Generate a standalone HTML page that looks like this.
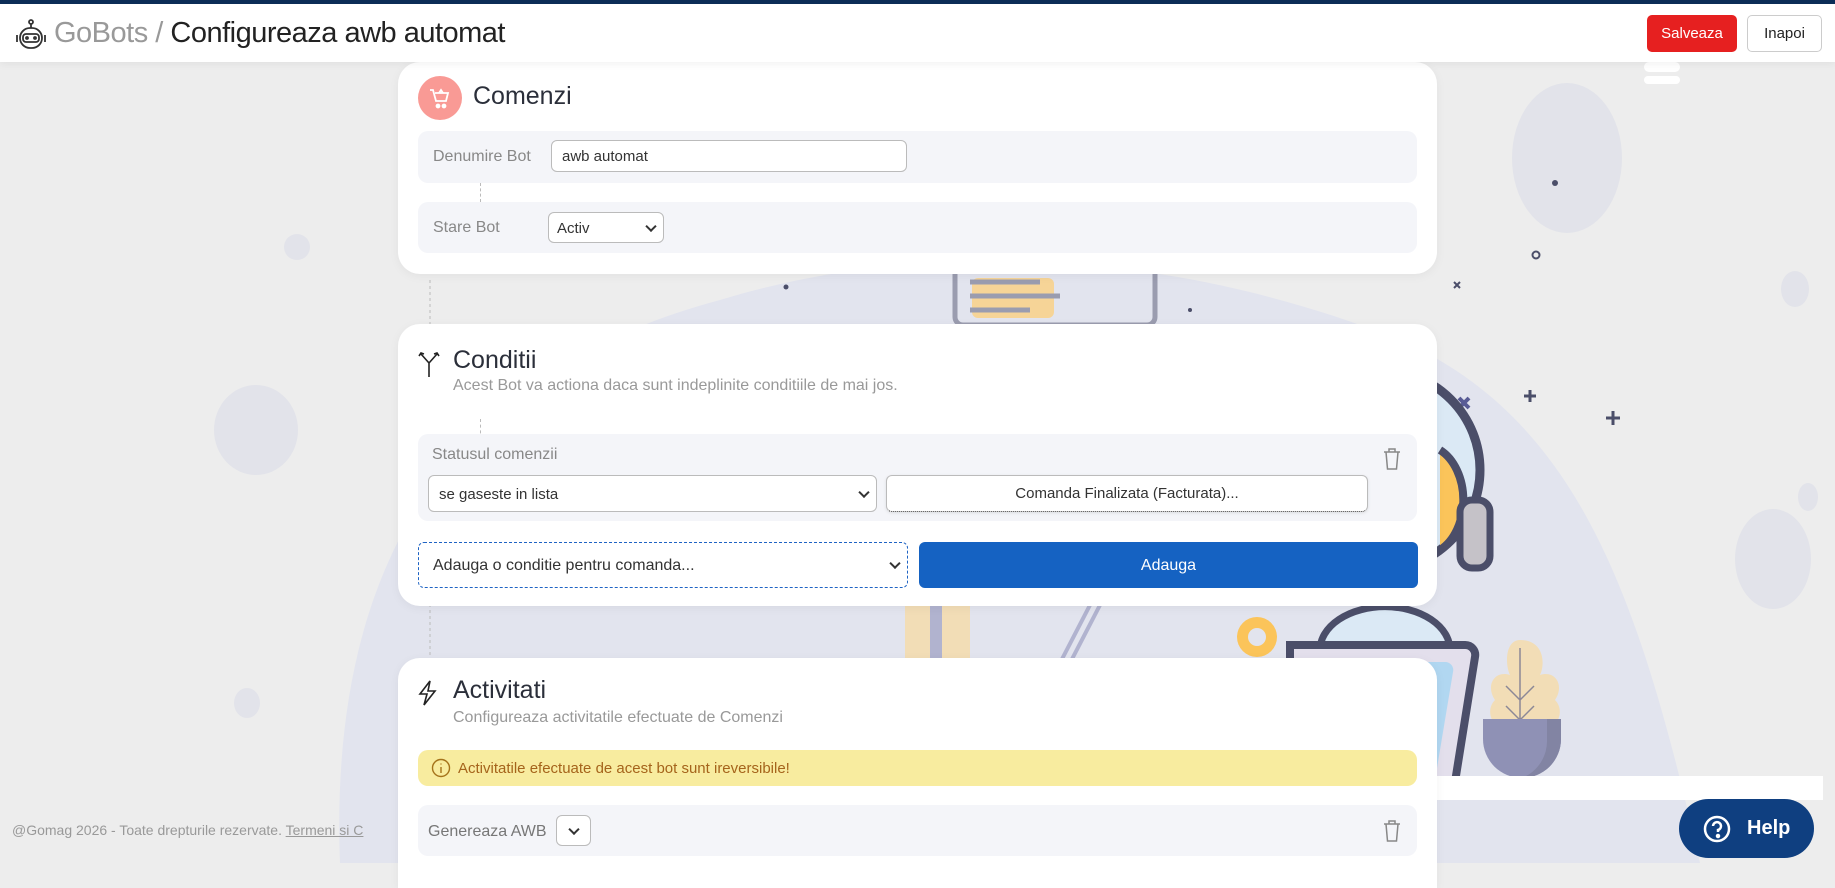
<!DOCTYPE html>
<html><head><meta charset="utf-8"><style>
*{box-sizing:border-box;margin:0;padding:0}
body{width:1835px;height:863px;overflow:hidden;background:#ededed;font-family:"Liberation Sans",sans-serif;position:relative;color:#333}
.abs{position:absolute}
.top{left:0;top:0;width:1835px;height:62px;background:#fff;border-top:4px solid #0c2d57;box-shadow:0 2px 8px rgba(0,0,0,.06);z-index:5}
.card{position:absolute;left:398px;width:1039px;background:#fff;border-radius:22px;box-shadow:0 2px 10px rgba(0,0,0,.05);z-index:3}
.row{position:absolute;left:20px;width:999px;background:#f4f5f9;border-radius:10px}
.lbl{position:absolute;color:#888;font-size:16px}
.inp{position:absolute;background:#fff;border:1px solid #bbb;border-radius:6px;font-size:15px;color:#333}
.chev{position:absolute;right:8px;top:50%;width:8px;height:8px;border-right:2px solid #333;border-bottom:2px solid #333;transform:translateY(-70%) rotate(45deg)}
.h{position:absolute;font-size:25px;color:#2b2f3a}
.sub{position:absolute;font-size:16px;color:#999}
</style></head><body>
<svg class="abs" style="left:0;top:0;z-index:1" width="1835" height="863">
<path d="M340 863 C330 600 420 380 720 300 C950 230 1200 260 1400 340 C1580 420 1640 600 1700 863 Z" fill="#e2e4ee"/>
<ellipse cx="1567" cy="158" rx="55" ry="75" fill="#e2e3ea"/>
<ellipse cx="1092" cy="136" rx="30" ry="35" fill="#e2e3ea"/>
<ellipse cx="1200" cy="35" rx="45" ry="35" fill="#e2e3ea"/>
<ellipse cx="256" cy="430" rx="42" ry="45" fill="#e2e3ea"/>
<ellipse cx="297" cy="247" rx="13" ry="13" fill="#e2e3ea"/>
<ellipse cx="247" cy="703" rx="13" ry="15" fill="#e2e3ea"/>
<ellipse cx="1773" cy="559" rx="38" ry="50" fill="#e2e3ea"/>
<ellipse cx="1795" cy="289" rx="14" ry="18" fill="#e2e3ea"/>
<ellipse cx="1808" cy="497" rx="10" ry="14" fill="#e2e3ea"/>
<rect x="1644" y="62" width="36" height="10" rx="5" fill="#fff"/>
<rect x="1644" y="76" width="36" height="8" rx="4" fill="#fff"/>
<circle cx="1555" cy="183" r="3" fill="#4b4e69"/>
<circle cx="1536" cy="255" r="3.5" fill="none" stroke="#4b4e69" stroke-width="2"/>
<circle cx="786" cy="287" r="2.5" fill="#4b4e69"/>
<circle cx="1190" cy="310" r="2" fill="#4b4e69"/>
<path d="M1454 282l6 6m0-6l-6 6" stroke="#4b4e69" stroke-width="2"/>
<path d="M1459 398l10 10m0-10l-10 10" stroke="#585b95" stroke-width="4"/>
<path d="M1530 390v12m-6-6h12M1613 411v14m-7-7h14" stroke="#4b4e69" stroke-width="3"/>
<circle cx="1380" cy="470" r="100" fill="#dbe9f5" stroke="#4b4e69" stroke-width="9"/>
<path d="M1440 450 a40 55 0 0 1 0 100" fill="#fbc45a" stroke="#4b4e69" stroke-width="8"/>
<rect x="1460" y="500" width="30" height="68" rx="12" fill="#c5c2c8" stroke="#4b4e69" stroke-width="7"/>
<rect x="1370" y="605" width="20" height="35" rx="8" fill="#b1d7f1" stroke="#4b4e69" stroke-width="5"/>
<path d="M1320 650 a60 40 0 0 1 130 0" fill="#dbe9f5" stroke="#4b4e69" stroke-width="7"/>
<path d="M1290 645 h175 a10 10 0 0 1 10 12 l-20 125 a10 10 0 0 1 -10 8 h-155 z" fill="#e3dfec" stroke="#4b4e69" stroke-width="8"/>
<path d="M1420 662 h25 a8 8 0 0 1 8 10 l-18 108 h-20 z" fill="#b1d7f1"/>
<path d="M1520 640 c-15 0 -15 25 -10 35 c-15 -5 -25 10 -15 25 c-10 10 -5 30 20 35 h20 c25 -5 30 -25 20 -35 c10 -15 0 -30 -15 -25 c5 -10 5 -35 -20 -35z" fill="#f2ddb6"/>
<path d="M1520 648 v90 M1520 700 l-14 -14 M1520 700 l14 -14 M1520 720 l-14 -14 M1520 720 l14 -14" stroke="#8c8896" stroke-width="1.5" fill="none"/>
<path d="M1483 719 h78 v20 a39 39 0 0 1 -78 0 z" fill="#8f91b5"/>
<path d="M1547 719 h14 v20 a39 39 0 0 1 -39 39 a40 40 0 0 0 25 -39z" fill="#8284a3"/>
<circle cx="1257" cy="637" r="20" fill="#fbc45a"/><circle cx="1257" cy="637" r="9" fill="#e2e4ee"/>
<rect x="1430" y="776" width="393" height="24" fill="#fff"/>
<rect x="955" y="265" width="200" height="60" rx="8" fill="none" stroke="#9a9caf" stroke-width="5"/>
<rect x="972" y="278" width="82" height="40" rx="6" fill="#f6d497"/>
<path d="M970 282h70M970 296h90M970 310h60" stroke="#9a9caf" stroke-width="5"/>
<path d="M430 280 v380" stroke="#bbb" stroke-dasharray="3 3"/>
<rect x="905" y="605" width="65" height="58" fill="#f2ddb6"/>
<rect x="930" y="605" width="12" height="58" fill="#b1b3cf"/>
<path d="M1090 605 l-30 58 M1100 605 l-30 58" stroke="#b1b3cf" stroke-width="4"/>
</svg>
<div class="abs top">
<svg class="abs" style="left:14px;top:15px" width="34" height="34" viewBox="0 0 34 34" fill="none" stroke="#333" stroke-width="1.8"><circle cx="17" cy="3" r="2"/><path d="M17 5v4"/><rect x="6" y="9" width="22" height="20" rx="10"/><rect x="9" y="15" width="16" height="8" rx="3"/><path d="M3 16v7M31 16v7"/><circle cx="13" cy="19" r="1" fill="#333"/><circle cx="21" cy="19" r="1" fill="#333"/></svg>
<div class="abs" style="left:54px;top:13px;font-size:29px;letter-spacing:-0.5px;white-space:nowrap"><span style="color:#999">GoBots /</span> <span style="color:#222">Configureaza awb automat</span></div>
<div class="abs" style="left:1647px;top:11px;width:90px;height:37px;background:#e62020;border-radius:5px;color:#fff;font-size:15px;line-height:37px;text-align:center">Salveaza</div>
<div class="abs" style="left:1747px;top:11px;width:75px;height:37px;background:#fff;border:1px solid #ccc;border-radius:5px;color:#222;font-size:15px;line-height:35px;text-align:center">Inapoi</div>
</div>
<div class="card" style="top:62px;height:212px">
<div class="abs" style="left:20px;top:14px;width:44px;height:44px;border-radius:50%;background:#f99a95"></div>
<svg class="abs" style="left:30px;top:24px" width="24" height="24" viewBox="0 0 24 24" fill="none" stroke="#fff" stroke-width="1.8"><path d="M2 4h3l3 11h10l2-8H7"/><path d="M11 7l2-3 2 3"/><circle cx="10" cy="20" r="1.5" fill="#fff"/><circle cx="16" cy="20" r="1.5" fill="#fff"/></svg>
<div class="h" style="left:75px;top:20px">Comenzi</div>
<div class="row" style="top:69px;height:52px">
<div class="lbl" style="left:15px;top:17px">Denumire Bot</div>
<div class="inp" style="left:133px;top:9px;width:356px;height:32px;padding:7px 10px">awb automat</div>
</div>
<div class="row" style="top:140px;height:51px">
<div class="lbl" style="left:15px;top:17px">Stare Bot</div>
<div class="inp" style="left:130px;top:10px;width:116px;height:31px;padding:7px 8px">Activ<span class="chev"></span></div>
</div>
<div class="abs" style="left:82px;top:121px;height:19px;border-left:1px dashed #bbb"></div>
</div>
<div class="card" style="top:324px;height:282px">
<svg class="abs" style="left:19px;top:26px" width="24" height="28" viewBox="0 0 24 28" fill="none" stroke="#222" stroke-width="1.6"><path d="M12 27V13M12 13L4 4M12 13l8-9M2 6l2-3 3 1M22 6l-2-3-3 1"/></svg>
<div class="h" style="left:55px;top:22px">Conditii</div>
<div class="sub" style="left:55px;top:53px">Acest Bot va actiona daca sunt indeplinite conditiile de mai jos.</div>
<div class="abs" style="left:82px;top:95px;height:20px;border-left:1px dashed #bbb"></div>
<div class="row" style="top:110px;height:87px">
<div class="lbl" style="left:14px;top:12px">Statusul comenzii</div>
<div class="inp" style="left:10px;top:41px;width:449px;height:37px;padding:10px 10px">se gaseste in lista<span class="chev"></span></div>
<div class="inp" style="left:468px;top:41px;width:482px;height:37px;line-height:35px;text-align:center;border-bottom:1px dotted #333;box-shadow:0 1px 3px rgba(0,0,0,.1)">Comanda Finalizata (Facturata)...</div>
<svg class="abs" style="left:965px;top:13px" width="18" height="24" viewBox="0 0 18 24" fill="none" stroke="#888" stroke-width="1.5"><path d="M1 5h16M6 5V2h6v3M3 5l1.5 17h9L15 5"/></svg>
</div>
<div class="abs" style="left:20px;top:218px;width:490px;height:46px;background:#fff;border:1px dashed #1e63c4;border-radius:6px;font-size:16px;padding:14px 14px;color:#333">Adauga o conditie pentru comanda...<span class="chev"></span></div>
<div class="abs" style="left:521px;top:218px;width:499px;height:46px;background:#1562c2;border-radius:6px;color:#fff;font-size:16px;text-align:center;line-height:48px">Adauga</div>
</div>
<div class="card" style="top:658px;height:230px;border-radius:22px 22px 0 0">
<svg class="abs" style="left:20px;top:22px" width="20" height="26" viewBox="0 0 20 26" fill="none" stroke="#222" stroke-width="1.6"><path d="M12 1L2 14h7l-3 11 11-14h-7z"/></svg>
<div class="h" style="left:55px;top:18px">Activitati</div>
<div class="sub" style="left:55px;top:51px">Configureaza activitatile efectuate de Comenzi</div>
<div class="row" style="top:92px;height:36px;background:#f8ec9f">
<svg class="abs" style="left:13px;top:8px" width="20" height="20" viewBox="0 0 20 20" fill="none" stroke="#a5731b" stroke-width="1.4"><circle cx="10" cy="10" r="8.5"/><path d="M10 9v6M10 5.5v1"/></svg>
<div class="abs" style="left:40px;top:10px;font-size:15px;color:#a5641b">Activitatile efectuate de acest bot sunt ireversibile!</div>
</div>
<div class="row" style="top:147px;height:51px">
<div class="lbl" style="left:10px;top:18px;color:#777">Genereaza AWB</div>
<div class="inp" style="left:138px;top:10px;width:35px;height:31px"><span class="chev" style="right:12px"></span></div>
<svg class="abs" style="left:965px;top:14px" width="18" height="24" viewBox="0 0 18 24" fill="none" stroke="#888" stroke-width="1.5"><path d="M1 5h16M6 5V2h6v3M3 5l1.5 17h9L15 5"/></svg>
</div>
</div>
<div class="abs" style="left:12px;top:822px;font-size:14px;color:#999;z-index:2">@Gomag 2026 - Toate drepturile rezervate. <u>Termeni si C</u></div>
<div class="abs" style="left:1679px;top:799px;width:135px;height:59px;border-radius:30px;background:#0f3f80;z-index:6;color:#fff;font-weight:bold;font-size:20px;line-height:59px;padding-left:68px">Help</div>
<svg class="abs" style="left:1703px;top:815px;z-index:7" width="28" height="28" viewBox="0 0 28 28" fill="none" stroke="#fff" stroke-width="2.5"><circle cx="14" cy="14" r="12"/><path d="M10 11a4 4 0 1 1 5 4v2"/><circle cx="15" cy="21" r="1" fill="#fff"/></svg>
</body></html>
